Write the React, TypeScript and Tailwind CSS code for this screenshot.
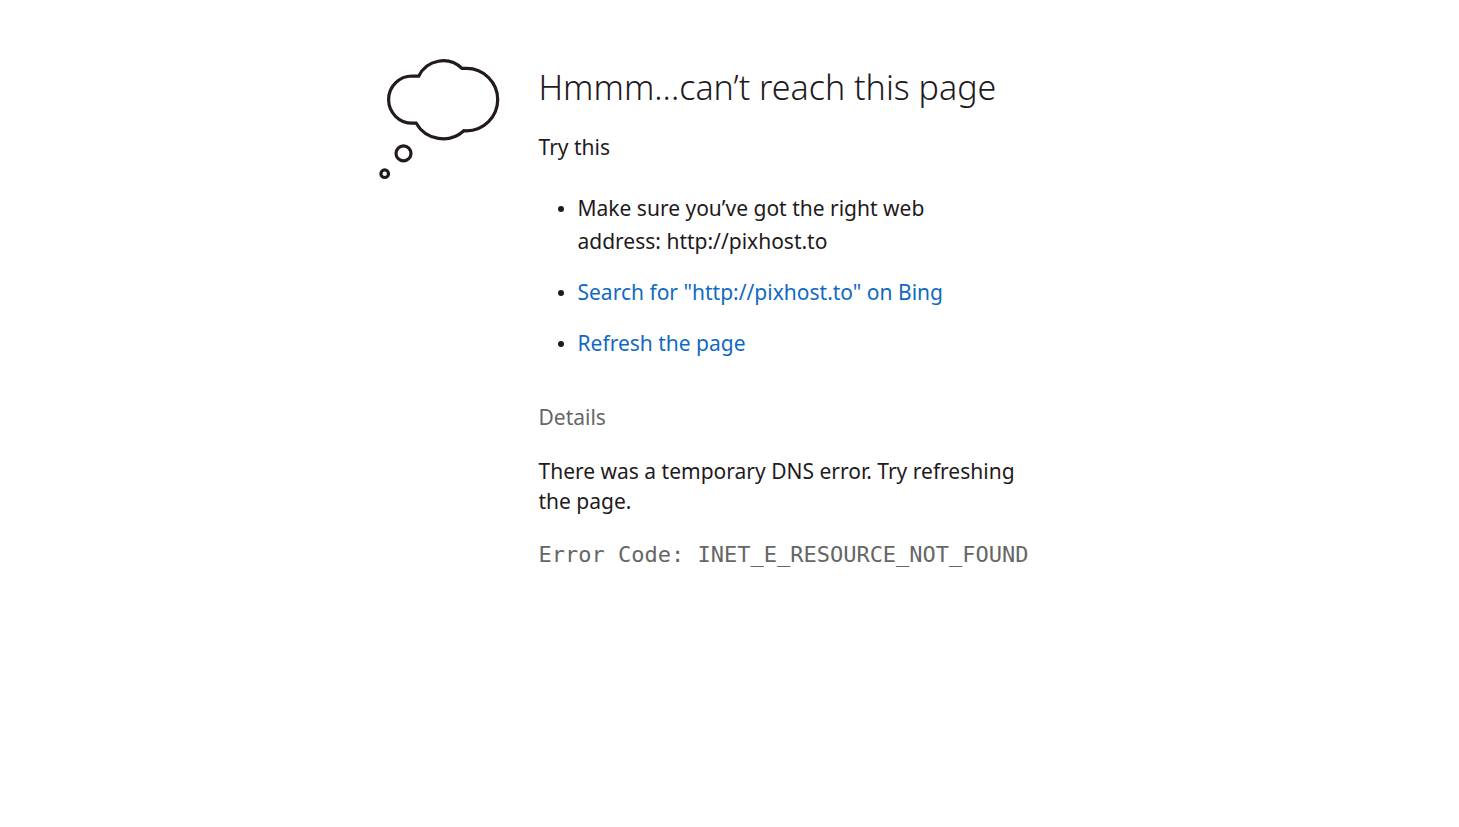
const bullet =
  "flex gap-[14px] before:mt-[14px] before:size-1.5 before:shrink-0 before:rounded-full before:bg-[#1f1a20] before:content-['']";

export default function App() {
  return (
    <main className="min-h-screen bg-white font-['Noto_Sans','Open_Sans',sans-serif] text-[21px] text-[#1f1a20]">
      <div className="mx-auto flex w-[702px] max-w-full items-start pt-[58px]">
        <svg className="h-[122px] w-[122px] shrink-0" viewBox="0 0 122 122" fill="none" stroke="#231a20" strokeWidth="3.2" aria-hidden="true">
          <path d="M37.200 65.200H33.200A23.600 23.600 0 0 1 33.200 18L39.700 18.200A27 27 0 0 1 82.900 10.400H87.500A31.200 31.200 0 0 1 87.500 72.800L84.900 72.700A31 31 0 0 1 37.200 65.200Z" />
          <circle cx="24.500" cy="95.400" r="7.500" />
          <circle cx="5.700" cy="115.700" r="3.800" />
        </svg>
        <div className="ml-[38px] flex-1">
          <h1 className="mt-1 text-[34px] leading-[50px] font-light">Hmmm...can’t reach this page</h1>
          <p className="mt-5 leading-[30px]">Try this</p>
          <ul className="mt-[30px] flex flex-col gap-[18px] pl-[19px] leading-[33px]">
            <li className={bullet}><span>Make sure you’ve got the right web<br />address: http://pixhost.to</span></li>
            <li className={bullet}><a className="text-[#106ac4]" href="#search">Search for "http://pixhost.to" on Bing</a></li>
            <li className={bullet}><a className="text-[#106ac4]" href="#refresh">Refresh the page</a></li>
          </ul>
          <h2 className="mt-[42px] leading-[30px] text-[#666]">Details</h2>
          <p className="mt-6 leading-[30px]">There was a temporary DNS error. Try refreshing<br />the page.</p>
          <p className="mt-6 font-['DejaVu_Sans_Mono',monospace] text-[22px] leading-[30px] whitespace-nowrap text-[#666]">Error Code: INET_E_RESOURCE_NOT_FOUND</p>
        </div>
      </div>
    </main>
  );
}
